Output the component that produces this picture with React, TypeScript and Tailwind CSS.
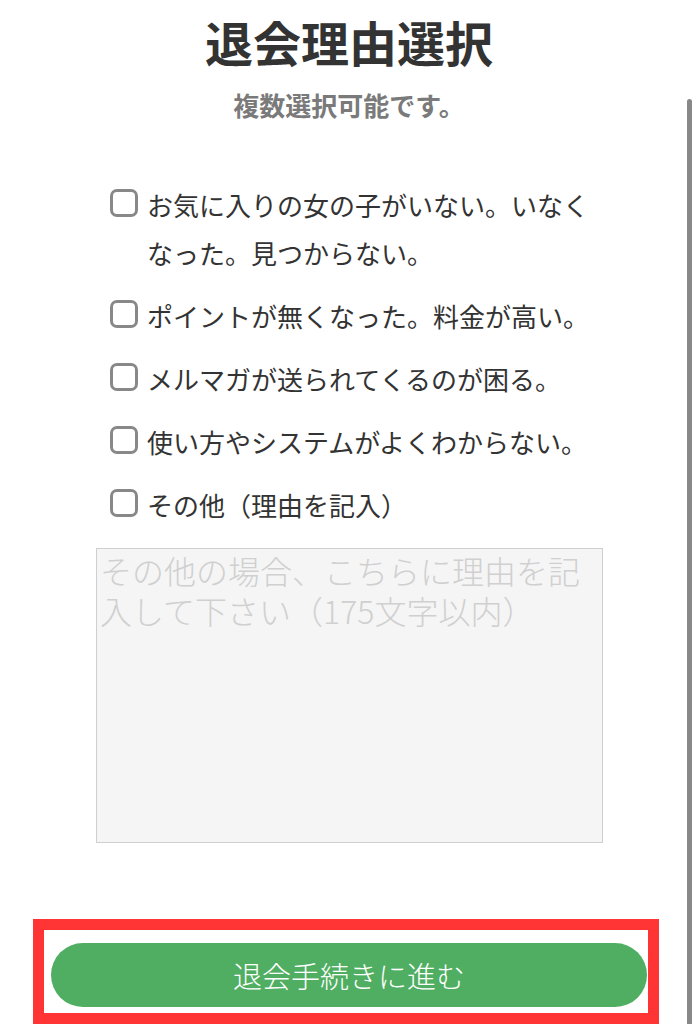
import React from "react";

const reasons: string[] = [
  "お気に入りの女の子がいない。いなくなった。見つからない。",
  "ポイントが無くなった。料金が高い。",
  "メルマガが送られてくるのが困る。",
  "使い方やシステムがよくわからない。",
  "その他（理由を記入）",
];

export default function App() {
  return (
    <div className="relative w-[698px] h-[1024px] overflow-hidden bg-white font-['Noto_Sans_CJK_JP','Noto_Sans',sans-serif]">
      <div className="flex flex-col">
        <h1 className="pt-[17px] text-center text-[48px] leading-[48px] font-bold text-[#333333]">
          退会理由選択
        </h1>
        <p className="mt-[22px] text-center text-[26px] leading-[36px] font-bold text-[#7a7a7a]">
          複数選択可能です。
        </p>

        <ul className="mt-[58px] ml-[110px] w-[495px] flex flex-col gap-[15px]">
          {reasons.map((r) => (
            <li key={r} className="flex items-start gap-[9px]">
              <span className="mt-[8px] shrink-0 w-[28px] h-[28px] rounded-[7px] border-[3px] border-[#888888] bg-white" />
              <span className="text-[26px] leading-[48px] text-[#333333]">{r}</span>
            </li>
          ))}
        </ul>

        <textarea
          className="mt-[19px] ml-[96px] w-[507px] h-[295px] resize-none border border-[#cfcfcf] bg-[#f5f5f5] pt-[1px] pb-[2px] pl-[3px] pr-[3px] text-[32px] leading-[40px] font-light text-[#333] outline-none placeholder:text-[#d0d0d0]"
          placeholder="その他の場合、こちらに理由を記入して下さい（175文字以内）"
        />

        <div className="mt-[76px] ml-[33px] w-[626px] h-[105px] border-[11px] border-[#ff3434] bg-white pt-[13px] pl-[7px] pr-[1px]">
          <button className="w-full h-[64px] rounded-full bg-[#50ae62] text-white text-[29px] leading-[64px] font-light">
            退会手続きに進む
          </button>
        </div>
      </div>

      <div className="absolute left-[687px] top-[99px] w-[5px] h-[940px] rounded-t-full bg-[#888888]" />
    </div>
  );
}
